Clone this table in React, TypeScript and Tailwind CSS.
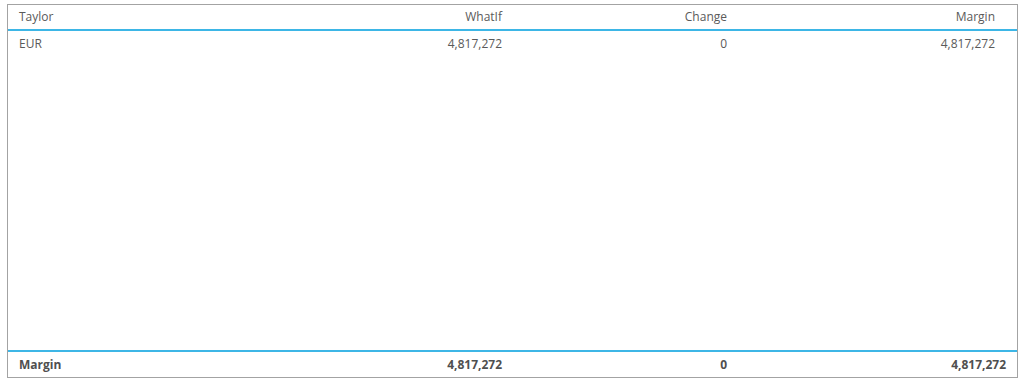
const cols = "grid grid-cols-[262px_232px_225px_268px]";

function Row({ cells, bold }: { cells: string[]; bold?: boolean }) {
  return (
    <div className={`${cols} ${bold ? "font-bold text-[#4f4f4f]" : "text-[#5a5a5a]"}`}>
      <div className="pl-[11px] text-left">{cells[0]}</div>
      <div className="text-right">{cells[1]}</div>
      <div className="text-right">{cells[2]}</div>
      <div className="text-right">{cells[3]}</div>
    </div>
  );
}

export default function App() {
  return (
    <div className="h-[383px] w-[1024px] bg-white pl-[7px] pt-[4px] font-['Open_Sans',sans-serif] text-[12px]">
      <div className="flex h-[374px] w-[1011px] flex-col border border-[#a3a3a3]">
        <div className="flex h-[26px] items-center border-b-2 border-[#3db6e6]">
          <Row cells={["Taylor", "WhatIf", "Change", "Margin"]} />
        </div>
        <div className="flex-1 pt-[3px]">
          <div className="flex h-[20px] items-center">
            <Row cells={["EUR", "4,817,272", "0", "4,817,272"]} />
          </div>
        </div>
        <div className="flex h-[27px] items-center border-t-2 border-[#3db6e6]">
          <div className="grid grid-cols-[262px_232px_225px_279px] font-bold text-[#4f4f4f]">
            <div className="pl-[11px]">Margin</div>
            <div className="text-right">4,817,272</div>
            <div className="text-right">0</div>
            <div className="text-right">4,817,272</div>
          </div>
        </div>
      </div>
    </div>
  );
}
